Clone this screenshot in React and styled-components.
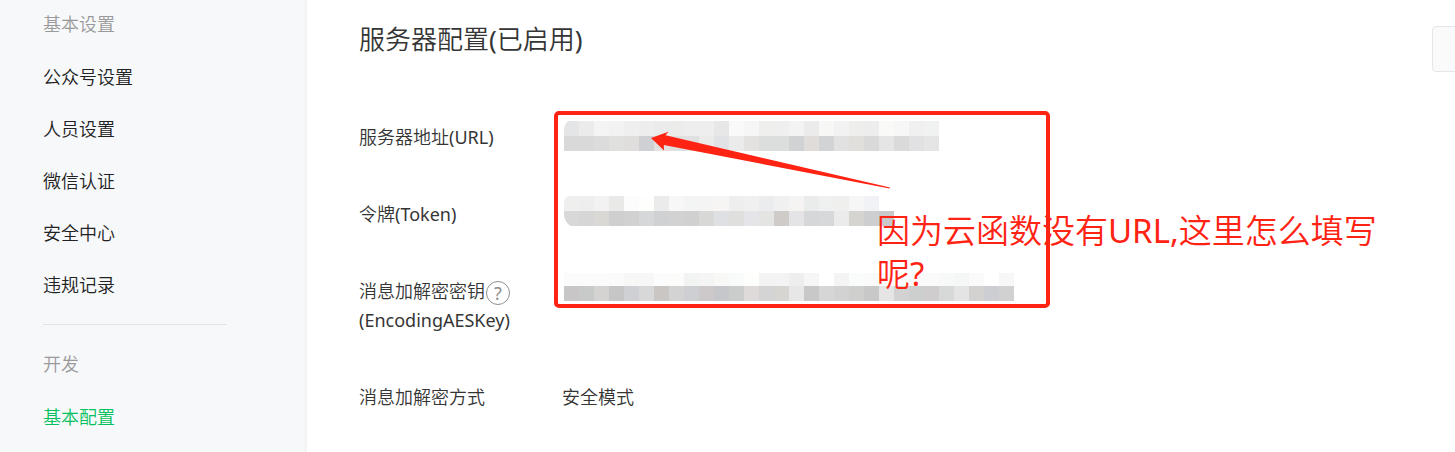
import React from 'react'
import styled, { createGlobalStyle } from 'styled-components'

//----------- Data ---------------------//
const accountLinks = ['公众号设置', '人员设置', '微信认证', '安全中心', '违规记录']

const CELL = 15

const urlBands = [
  { y: 2, height: 15, colors: '#e4e5e7 #ebebeb #f4f4f4 #f2f2f2 #efefef #ededed #ebebeb #ececea #eeeeee #eeeeee #e7e7e7 #f9f9f9 #f6f6f6 #efefee #efefef #f3f3f3 #ebebeb #f7f7f5 #f2f2f2 #eeeeec #ededed #f9f9f7 #f7f7f7 #f0f0f0 #eff2f1' },
  { y: 17, height: 15, colors: '#d9d9da #d9d9d9 #dcdcdc #e0e0de #dfdedc #cfd0d4 #e2e1df #dedfdf #e0e0e1 #ebebe9 #e1e2e5 #ebebec #e3e2e0 #dcdddd #dcdddd #d0d2d4 #dfdcda #d1d3d5 #e1e1e1 #e1dfdc #d9d9d9 #e5e5e5 #dadada #e1e1e4 #e5e5e5' },
]

const tokenBands = [
  { y: 0, height: 15, colors: '#efefed #eeeeee #f2f2f2 #e9e9e7 #fcfcfc #fefefc #ebebec #f7f7f8 #f3f5f5 #f3f4f3 #f6f5f3 #eeeeef #f0f0f0 #ebeced #f0f0f0 #f5f4f2 #e9eceb #eff1f0 #efefed #f6f6f6 #f0f2f5' },
  { y: 15, height: 15, colors: '#d8d8d8 #d6d6d6 #d9d8d5 #cfcfcf #d1d1d1 #d5d7d9 #d0d1d3 #d2d2d2 #d0d0d0 #d8d8d6 #dfe0e3 #dfdfdd #e5e5e9 #e4e4e2 #cecbc9 #e4e4e7 #d5d7d8 #d7d8da #ebebeb #d5d4d0 #cdced0 #c9c9cb' },
]

const keyBands = [
  { y: 0, height: 13, colors: '#fbfbfb #fbfbfb #fbfbfb #fafafa #f7f7f7 #f7f7f7 #fcfcfc #fcfcfa #f2f4f4 #f5f5f5 #f8f8f6 #f9fbfb #fefefc #f3f3f3 #f3f3f3 #eeeeee #f6f6f6 #ffffff #f4f4f4 #fafcfc #fafafa #fafafa #fdfdfd #fafafa #fafafa #f7f8f8 #f5f7f7 #fafafa #ffffff #f7f7f7' },
  { y: 13, height: 15, colors: '#c9c6c7 #c8cac9 #d5d3d1 #c7c6c6 #cfd0d3 #d8d8d9 #c9c6c4 #d2d3d2 #cecfd2 #cdc9ca #c6c7ca #cbcdcc #dddad9 #d3d4d3 #d7d5d2 #e7e7e7 #c8c8c8 #d6d6d6 #d1d2d1 #cfcfcd #c8c8c8 #e5e5e6 #d2d2d2 #cdcfce #d0cdce #d7d9d8 #e4e4e4 #d3d2d0 #cdced4 #d1d1d1' },
]

//----------- Styling ------------------//
const GlobalStyle = createGlobalStyle`
  * {
    box-sizing: border-box;
  }

  body {
    margin: 0;
    background: #ffffff;
    color: #353535;
    font-family: 'Noto Sans', 'Noto Sans CJK SC DemiLight', 'Noto Sans CJK SC', sans-serif;
    font-size: 18px;
    font-weight: 400;
    overflow: hidden;
  }
`

const Page = styled.div`
  display: flex;
  min-height: 100vh;
`

const Sidebar = styled.nav`
  flex: 0 0 307px;
  padding: 0 80px 0 43px;
  background: linear-gradient(to left, #f2f3f4, #f7f8fa 5px);
`

const GroupName = styled.div`
  margin-bottom: 3px;
  line-height: 48px;
  color: #9a9a9a;
`

const NavLink = styled.a`
  display: block;
  line-height: 52px;
  color: ${props => props.$active ? '#07c160' : '#222222'};
  text-decoration: none;
`

const Divider = styled.hr`
  height: 1px;
  margin: 13px 0 15px;
  border: 0;
  background: #e1e3e5;
`

const Main = styled.main`
  position: relative;
  flex: 1;
  min-width: 0;
  padding: 26px 0 0 52px;
  overflow: hidden;
`

const Header = styled.header`
  display: flex;
  align-items: flex-start;
  justify-content: space-between;
  margin-bottom: 51px;
`

const Title = styled.h1`
  margin: 0;
  font-size: 26px;
  font-weight: 400;
  line-height: 26px;
`

// the button runs past the right edge of the window
const HeaderButton = styled.button`
  width: 120px;
  height: 46px;
  margin-right: -97px;
  border: 1px solid #e4e7ea;
  border-radius: 4px;
  background: #fafafa;
`

const Settings = styled.dl`
  display: flex;
  flex-direction: column;
  gap: 48px;
  margin: 0;
`

const Setting = styled.div`
  display: grid;
  grid-template-columns: 203px 1fr;
  line-height: 29px;
`

const Label = styled.dt`
  white-space: nowrap;
`

const Value = styled.dd`
  margin: 0;
  height: 29px;
`

const HelpButton = styled.button`
  width: 24px;
  height: 24px;
  margin-left: 1px;
  padding: 0;
  border: 1px solid #8f8f8f;
  border-radius: 50%;
  background: none;
  color: #8f8f8f;
  font: inherit;
  line-height: 22px;
  vertical-align: middle;
`

const MosaicSvg = styled.svg`
  display: block;
  margin: -4px 0 0 2px;
  border-radius: ${props => props.$radius};
`

const Frame = styled.div`
  position: absolute;
  top: 111px;
  left: 247px;
  width: 496px;
  height: 197px;
  border: 4px solid #ff2313;
  border-radius: 5px;
`

const Arrow = styled.svg`
  position: absolute;
  top: 130px;
  left: 343px;
`

const Note = styled.p`
  position: absolute;
  top: 209px;
  left: 570px;
  width: 510px;
  margin: 0;
  color: #ff2313;
  font-size: 33px;
  line-height: 43px;
`
//--------------------------------------//

function Mosaic({ bands, radius }) {
  return (
    <MosaicSvg width={CELL * 30} height='32' $radius={radius} shapeRendering='crispEdges' aria-hidden='true'>
      {bands.map(band => band.colors.split(' ').map((color, i) => (
        <rect key={`${band.y}-${i}`} x={i * CELL} y={band.y} width={CELL} height={band.height} fill={color} />
      )))}
    </MosaicSvg>
  )
}

export default function App() {
  return (
    <>
      <GlobalStyle />
      <Page>
        <Sidebar>
          <GroupName>基本设置</GroupName>
          {accountLinks.map(name => <NavLink href='#' key={name}>{name}</NavLink>)}
          <Divider />
          <GroupName>开发</GroupName>
          <NavLink href='#' $active>基本配置</NavLink>
        </Sidebar>
        <Main>
          <Header>
            <Title>服务器配置(已启用)</Title>
            <HeaderButton type='button' />
          </Header>
          <Settings>
            <Setting>
              <Label>服务器地址(URL)</Label>
              <Value><Mosaic bands={urlBands} radius='10px 0 0 0' /></Value>
            </Setting>
            <Setting>
              <Label>令牌(Token)</Label>
              <Value><Mosaic bands={tokenBands} radius='6px 0 0 14px' /></Value>
            </Setting>
            <Setting>
              <Label>
                消息加解密密钥<HelpButton type='button'>?</HelpButton>
                <br />
                (EncodingAESKey)
              </Label>
              <Value><Mosaic bands={keyBands} radius='0' /></Value>
            </Setting>
            <Setting>
              <Label>消息加解密方式</Label>
              <Value>安全模式</Value>
            </Setting>
          </Settings>
          <Frame />
          <Arrow width='242' height='62' aria-hidden='true'>
            <path d='M1 8 L18.5 1.7 L15.5 5.3 L240 57.5 L239.5 58.6 L13.8 15 L14 20.5 Z' fill='#ff2313' />
          </Arrow>
          <Note>因为云函数没有URL,这里怎么填写呢?</Note>
        </Main>
      </Page>
    </>
  )
}
